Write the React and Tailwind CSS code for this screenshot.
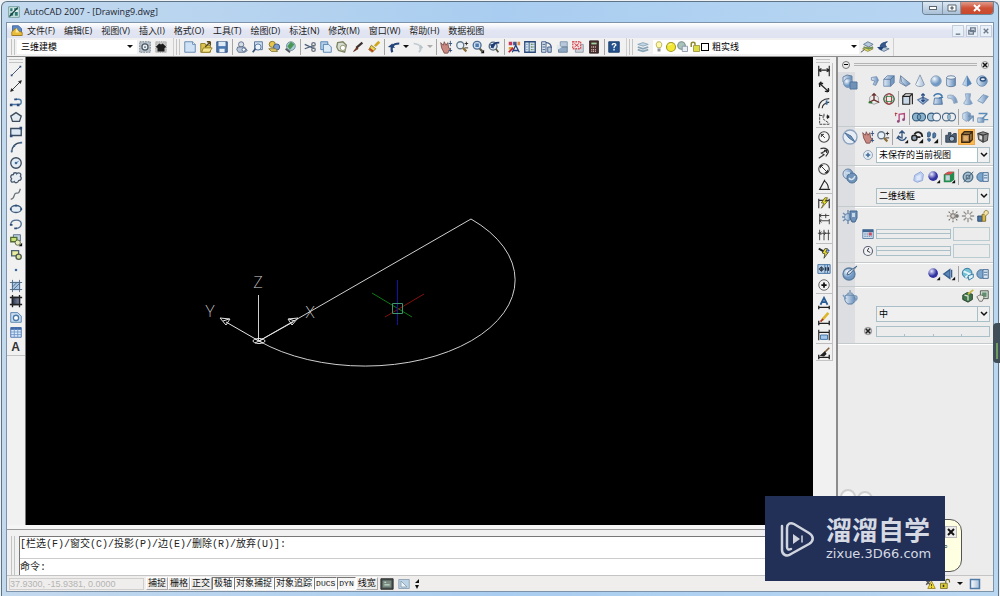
import React from 'react';

const navy = '#2c4a78';
const steel = 'url(#steel)';

const icons = {
  gear: <><path d="M2 2h12v12H2z" fill="#b9c3cc" stroke="#6d7a86" strokeDasharray="2 1" /><circle cx="8" cy="8" r="3.5" fill="#e8edf0" stroke="#4d5965" strokeWidth="1.5" /><circle cx="8" cy="8" r="1" fill="#4d5965" /></>,
  home: <><path d="M2 2h12v12H2z" fill="#c6c6c6" stroke="#8a8a8a" strokeDasharray="1 1" /><path d="M2 8l4-4 2 1 2-1 4 4-2 1v4H4V9z" fill="#1a1a1a" /></>,
  page: <><path d="M2 2h9l3 3v9H2z" fill="#cfe2f5" stroke="#5a7fa8" /><path d="M11 2v3h3" fill="#fff" stroke="#5a7fa8" /></>,
  open: <><path d="M2 4h5l1 2h5v8H2z" fill="#d9c34a" stroke="#8a7520" /><path d="M5 9h10l-3 5H3z" fill="#f5e68a" stroke="#8a7520" /><path d="M7 8l6-6m0 0H9m4 0v4" stroke="#5b4a1a" strokeWidth="1.5" fill="none" /></>,
  save: <><path d="M2 2h12v12H2z" fill="#4a78b0" stroke="#2b4a78" /><path d="M4 2h8v5H4z" fill="#dfeaf5" /><path d="M5 10h6v4H5z" fill="#e8eef5" /></>,
  print: <><circle cx="7" cy="5" r="3" fill="#d5dde8" stroke="#5c6c84" /><path d="M3 8h8l3 4-3 2H4l-2-3z" fill="#b7c6da" stroke="#5c6c84" /><circle cx="10" cy="11" r="2" fill="#fff" stroke="#46628c" /></>,
  preview: <><path d="M4 2h9v9H4z" fill="#cfe0f2" stroke="#4e6f96" /><circle cx="8" cy="8" r="3.5" fill="#eaf3fb" stroke="#4e6f96" /><path d="M5 10l-3 4" stroke="#3d5577" strokeWidth="2" /></>,
  publish: <><circle cx="6" cy="5" r="3.5" fill="#e7c64a" stroke="#80702b" /><circle cx="11" cy="8" r="3.5" fill="#7c9ccb" stroke="#36527f" /><path d="M2 10h8l2 3H5z" fill="#e3cf6c" stroke="#80702b" /></>,
  globe: <><circle cx="9" cy="7" r="5" fill="#a9cbd6" stroke="#6c8b98" /><path d="M9 2l4 3-5 6-3-4z" fill="#4c9654" /><path d="M3 10l5 4" stroke="#50575e" strokeWidth="2" /></>,
  cut: <><path d="M2 5l11 5M2 10l11-4" stroke="#4a5f78" strokeWidth="1.5" /><circle cx="12" cy="5" r="2" fill="none" stroke="#6a7480" strokeWidth="1.5" /><circle cx="12" cy="11" r="2" fill="none" stroke="#6a7480" strokeWidth="1.5" /></>,
  copy: <><path d="M2 2h8v9H2z" fill="#b5d1ec" stroke="#4f7cab" /><path d="M5 5h6l3 3v6H5z" fill="#dcebf8" stroke="#4f7cab" /></>,
  paste: <><path d="M3 3l6-1 4 4-2 8-7-2-2-4z" fill="#d5ddd0" stroke="#7d8565" strokeWidth="1.5" /><circle cx="9" cy="9" r="3" fill="#fff" stroke="#8a8f66" /></>,
  brush: <><path d="M13 3l-7 6" stroke="#3b3030" strokeWidth="2.5" /><path d="M7 8l-4 5 5-3z" fill="#7a3b22" stroke="#5d2b18" /></>,
  match: <><path d="M14 2L9 7" stroke="#d0a520" strokeWidth="3" /><path d="M5 6l5 4-4 4-4-3z" fill="#e8d54d" stroke="#8a6d1d" /><path d="M3 10l4 3" stroke="#c13b2b" strokeWidth="2" /></>,
  undo: <><path d="M6 14C4 9 6 4 14 4" stroke="#23457b" strokeWidth="2.5" fill="none" /><path d="M1 8l5-4 3 5z" fill="#23457b" /></>,
  redo: <><path d="M9 14c4-4 3-9-6-10" stroke="#c0ccd2" strokeWidth="2" fill="none" /><path d="M14 9l-5 1 2-5z" fill="#b8c4ca" /></>,
  pan: <><path d="M2 3l3 3 1-4 2 4 2-3 1 6 2 1-3 5H6L3 9z" fill="#c98880" stroke="#7d4f4c" /><path d="M13 1v6m-2-3h4M13 9v5m-2-2h4" stroke="#33507c" /></>,
  zoom: <><circle cx="6" cy="6" r="4" fill="#e8f1f8" stroke="#64788c" strokeWidth="1.5" /><path d="M9 9l4 4" stroke="#8d6f35" strokeWidth="2.5" /><path d="M11 4h4m-2-2v4m-2 3h4" stroke="#222" /></>,
  zoomWin: <><circle cx="7" cy="6" r="4.500" fill="#cfe0f0" stroke="#4d6c91" strokeWidth="1.5" /><path d="M5 4h4v4H5z" fill="#4d7bb0" /><path d="M10 10l3 3" stroke="#554" strokeWidth="2.5" /><path d="M15 11v4h-4z" fill="#111" /></>,
  zoomPrev: <><circle cx="7" cy="7" r="4.500" fill="#dfe9f2" stroke="#52687f" strokeWidth="1.5" /><path d="M10 10l3 4" stroke="#554" strokeWidth="2" /><path d="M5 9c1-4 4-6 9-6" stroke="#1d3d74" strokeWidth="2" fill="none" /><path d="M3 5l7-1-3 6z" fill="#1d3d74" /></>,
  props: <><path d="M2 2h4v4H2z" fill="#c73b58" /><path d="M7 2h4v4H7z" fill="#43548f" /><path d="M12 2h3v4h-3z" fill="#de8a43" /><path d="M2 8h5v3H2z" fill="#e0a33b" /><path d="M6 14l4-8 4 8M7 12h6" stroke="#23407a" strokeWidth="1.5" fill="none" /><path d="M2 14l5-5" stroke="#b23" strokeWidth="2" /></>,
  center: <><path d="M2 2h12v12H2z" fill="#d3e3f2" stroke="#2c4a78" strokeWidth="1.5" /><path d="M7 2v12M4 5h1m-1 3h1m-1 3h1" stroke="#2c4a78" /><path d="M9 5h4M9 8h4M9 11h4" stroke="#6a8f5a" strokeDasharray="2 1" strokeWidth="1.500" /></>,
  palette: <><path d="M3 2h5v12H3z" fill="#d9e4ef" stroke="#38547f" /><path d="M4 5h3M4 8h3m-3 3h3" stroke="#38547f" /><path d="M8 3c4 0 6 3 6 6" stroke="#38547f" strokeWidth="1.500" fill="none" /><path d="M10 8h4v6h-4z" fill="#b8cbe0" stroke="#38547f" /></>,
  sheets: <><path d="M6 2h8v6H6z" fill="#b6c8da" stroke="#7e93a8" /><path d="M4 8h10v6H4z" fill="#8fa9c4" stroke="#677b90" /><path d="M2 5l6 3-6 4" fill="#dfe6ec" /></>,
  markup: <><path d="M5 5h9v9H5z" fill="#cdd3da" stroke="#8a96a3" /><path d="M2 2h9v8H2z" fill="#f6dcdc" stroke="#d4545c" strokeDasharray="2 1" strokeWidth="1.5" /><path d="M4 4l5 4m0-4L4 8" stroke="#c9343c" /></>,
  calc: <><path d="M3 1h10v14H3z" fill="#4a3030" stroke="#2a1c1c" /><path d="M5 3h6v2H5z" fill="#9fd4a0" /><path d="M5 8h6M5 11h6M5 13h6" stroke="#e6c8c0" strokeDasharray="1 1" strokeWidth="1.500" /></>,
  help: <><path d="M2 2h12v12H2z" fill="#24528c" stroke="#183a68" /><path d="M6 6c0-3 5-2 4 0-1 1-2 1-2 3m0 1v2" stroke="#fff" strokeWidth="1.500" fill="none" /></>,
  layers: <><path d="M2 5l6-2 6 2-6 2z" fill="#c3d6e4" stroke="#86a3b8" /><path d="M2 8l6 2 6-2M2 11l6 2 6-2" stroke="#86a3b8" strokeWidth="2" fill="none" /></>,
  bulb: <><path d="M8 1c5 0 4 6 2 8H6C4 7 3 1 8 1z" fill="#fff9b0" stroke="#a69a2e" /><path d="M6 10h4v4H6z" fill="#8c9198" /></>,
  sun: <><circle cx="8" cy="8" r="6" fill="#f2e936" stroke="#a39a25" strokeWidth="1.500" /><path d="M5 6c1-2 3-2 4-2" stroke="#fff" /></>,
  freeze: <><circle cx="6" cy="6" r="5" fill="#a9c2bb" stroke="#78908b" strokeWidth="1.500" /><path d="M7 7h7v7H7z" fill="#e8eef2" stroke="#7a8a98" /></>,
  lock: <><path d="M3 8V4c0-3 5-3 5 0v2" stroke="#8f8a30" strokeWidth="2" fill="none" /><path d="M6 6h8v8H6z" fill="#dddc44" stroke="#8f8a30" /></>,
  layerPrev: <><path d="M3 10l5-2 7 2-6 3z" fill="#e7df5c" stroke="#8c8744" /><path d="M4 5l5-3 6 3-5 3z" fill="#b7c9da" stroke="#5d7690" /><path d="M4 8l6 2 5-2" stroke="#6f8f5a" strokeWidth="2" /><path d="M1 14l4-3" stroke="#444" /></>,
  layerState: <><path d="M3 10l5-2 7 2-6 3z" fill="#b7c9da" stroke="#5d7690" /><path d="M5 9c-1-5 3-6 8-7-3 2-3 3-1 6" fill="#37598c" stroke="#1d4078" /><path d="M1 8h8l-3 4z" fill="#1d4078" /></>,

  line: <><path d="M3 13L13 3" stroke="#33455e" /><path d="M2 12h2v2H2zM12 2h2v2h-2z" fill={navy} /></>,
  xline: <><path d="M2 14L14 2" stroke="#222" /><path d="M3 11l2 2-3 1zM11 3l2 2 1-3z" fill="#222" stroke="#222" /></>,
  pline: <><path d="M2 12h9c4 0 4-6 0-6H8" stroke="#4c7aa6" strokeWidth="1.500" fill="none" /><path d="M1 11h3v3H1zM9 11h3v3H9zM6 5h3v2H6z" fill={navy} /></>,
  polygon: <path d="M8 3l6 4-2 6H4L2 7z" fill="#e3eaf0" stroke="#3c4c5e" strokeWidth="1.500" />,
  rect: <><path d="M2 4h12v8H2z" fill="#dce8f4" stroke="#3c4c5e" strokeWidth="1.500" /><path d="M1 11h3v3H1zM12 2h3v3h-3z" fill={navy} /></>,
  arc: <><path d="M3 14C3 8 7 3 14 3" stroke="#33455e" strokeWidth="1.500" fill="none" /><path d="M2 12h2v2H2zM5 6h2v2H5zM13 2h2v2h-2z" fill="#3d6d9f" /></>,
  circle: <><circle cx="8" cy="8" r="6" fill="#e4edf5" stroke="#3c4c5e" strokeWidth="1.500" /><path d="M8 8l3-2" stroke="#3d6d9f" /><circle cx="8" cy="8" r="1.500" fill="#3d6d9f" /></>,
  cloud: <path d="M5 4c0-3 4-2 4-1 2-2 6 0 4 3 2 2 1 5-2 5-1 3-4 3-5 1-3 2-5-1-3-3-2-2-1-5 2-5z" fill="#e7edf2" stroke="#46566a" strokeWidth="1.500" />,
  spline: <path d="M2 14c5 0 3-7 6-7s3 1 5-5" stroke="#6a7078" strokeWidth="1.500" fill="none" />,
  ellipse: <><ellipse cx="8" cy="8" rx="6" ry="4" fill="#e4edf5" stroke="#3d5878" strokeWidth="1.500" /><path d="M1 7h2v2H1zM13 7h2v2h-2zM7 3h2v2H7z" fill={navy} /></>,
  earc: <><path d="M2 8c1-6 12-6 12 0 0 3-3 5-6 5" stroke="#4f6d91" strokeWidth="1.500" fill="none" /><path d="M1 8h3v2H1zM6 12h3v2H6z" fill={navy} /></>,
  insert: <><path d="M5 2h8v7H5z" fill="#c4d5e4" stroke="#49617c" /><path d="M2 5h7v5H2z" fill="#cddf74" stroke="#4f6d31" strokeWidth="1.500" /><circle cx="10" cy="11" r="3" fill="#e8ecb8" stroke="#4b5b40" /><path d="M15 11v4h-4z" fill="#111" /></>,
  block: <><path d="M3 3h8v6H3z" fill="#e8ec9c" stroke="#4b6171" strokeWidth="1.500" /><circle cx="11" cy="10" r="3" fill="#dadf9c" stroke="#4a5947" strokeWidth="1.500" /></>,
  point: <circle cx="8" cy="8" r="1.500" fill="#3d6d9f" />,
  hatch: <><path d="M3 3h10v10H3z" fill="#a9c6e3" /><path d="M4 1v14M12 1v14M1 4h14M1 12h14M4 9l5-5M5 12l7-7" stroke="#4c6684" /></>,
  gradient: <><path d="M3 3h10v10H3z" fill="url(#dark)" /><path d="M4 1v14M12 1v14M1 4h14M1 12h14" stroke="#222" strokeWidth="1.500" /></>,
  region: <><path d="M2 3h8l4 4v7H2z" fill="#cbdff2" stroke="#4c79a8" /><circle cx="8" cy="9" r="3" fill="#fff" stroke="#4c79a8" strokeWidth="1.500" /></>,
  table: <><path d="M2 3h12v11H2z" fill="#dcebfa" stroke="#3f68a8" /><path d="M2 4h12" stroke="#3f68a8" strokeWidth="3" /><path d="M6 4v10m4-10v10M2 8h12M2 11h12" stroke="#6f94c8" /></>,

  dimLinear: <path d="M2 2v12M14 2v12M2 7h12M5 5L2 7l3 2M11 5l3 2-3 2" stroke="#222" fill="none" strokeWidth="1.300" />,
  dimAligned: <path d="M2 5l3-3M11 14l3-3M3 4l10 9M3 8V4h4M9 13h4V9" stroke="#222" fill="none" strokeWidth="1.500" />,
  dimArc: <><path d="M2 14C2 7 7 3 14 3M6 14c0-4 3-6 8-7" stroke="#333" fill="none" strokeWidth="1.300" /><path d="M11 5v5" stroke="#3d6d9f" strokeWidth="2" /></>,
  dimOrd: <><path d="M3 2v12h11M3 4h4v4l7 5M8 2v3m4-2v5" stroke="#333" fill="none" strokeDasharray="3 1" /><path d="M11 4h3v3h-3z" fill="#222" /></>,
  dimRadius: <><circle cx="8" cy="8" r="6" fill="#f7f7f7" stroke="#444" strokeWidth="1.300" /><path d="M9 9L5 5m0 3V5h3" stroke="#222" fill="none" /></>,
  dimJog: <path d="M4 3c6-2 11 2 8 6l-2 3M2 14l6-4-3-2 6-3M8 5h3v3" stroke="#333" fill="none" strokeWidth="1.300" />,
  dimDia: <><circle cx="8" cy="8" r="6" fill="#f7f7f7" stroke="#444" strokeWidth="1.300" /><path d="M4 4l8 8M4 7V4h3m2 8h3V9" stroke="#222" fill="none" /></>,
  dimAngle: <path d="M9 2L3 13h12M8 3c3 2 5 5 5 9" stroke="#222" fill="none" strokeWidth="1.300" />,
  dimQuick: <><path d="M2 3v11M14 3v11M2 5h12" stroke="#333" strokeWidth="1.300" /><path d="M9 2l-4 6h3l-3 6 7-8H9l3-4z" fill="#eadf27" stroke="#696525" /></>,
  dimBase: <path d="M3 2v12M10 2v5M14 8v6M3 4h11M3 10h11M5 2L3 4l2 2m0 2l-2 2 2 2" stroke="#333" fill="none" />,
  dimCont: <path d="M3 2v12M8 2v12M13 2v12M1 6h14M5 4L3 6l2 2m3-4l2 2-2 2" stroke="#333" fill="none" />,
  leader: <><path d="M2 3l7 4" stroke="#222" strokeWidth="2" /><path d="M9 3L6 8l3 1-1 5 5-7h-3l2-4z" fill="#eadf27" stroke="#444" /><path d="M12 4l2 2" stroke="#3454c8" strokeWidth="2" /></>,
  tolerance: <><path d="M1 3h14v10H1z" fill="#b9d0e8" stroke="#3c6a9c" /><path d="M9 3v10M12 3v10" stroke="#3c6a9c" /><circle cx="5" cy="8" r="2" stroke="#234" /><path d="M5 5v6M2 8h6" stroke="#234" /><path d="M10 6v4M13 6v4" stroke="#223" strokeWidth="1.500" /></>,
  centerMark: <><circle cx="8" cy="8" r="6" fill="none" stroke="#555" /><path d="M8 5v6M5 8h6" stroke="#111" strokeWidth="2" /></>,
  dimEdit: <><path d="M4 10l4-8 4 8M6 7h5" stroke="#285b93" strokeWidth="2" fill="none" /><path d="M2 11v4M14 11v4M2 13h12" stroke="#222" strokeWidth="1.500" /></>,
  dimTextEdit: <><path d="M13 1L6 9" stroke="#dcb72d" strokeWidth="3" /><path d="M7 8l-3 3" stroke="#a32" strokeWidth="2" /><path d="M2 10v5M14 10v5M2 13h12" stroke="#222" strokeWidth="1.500" /></>,
  dimUpdate: <><path d="M2 2v12M14 2v12M2 5h12" stroke="#222" strokeWidth="1.300" /><path d="M4 8h8v5H4z" fill="#a6c7e7" stroke="#356aa0" /></>,
  dimStyle: <><path d="M14 2L8 8" stroke="#806440" strokeWidth="2" /><path d="M9 6L3 11l5 1 3-3z" fill="#222" /><path d="M2 10v5M14 10v5M2 13h12" stroke="#222" strokeWidth="1.500" /></>,

  polysolid: <path d="M5 4l6-1 2 4-3 6-3-1 2-4-4-1z" fill={steel} stroke="#7790b0" />,
  box: <><path d="M2 6l4-4h8v8l-4 4H2z" fill={steel} stroke="#6d8bb0" /><path d="M2 6h8l4-4M10 6v8" stroke="#536f94" fill="none" /></>,
  wedge: <><path d="M3 2l11 9-5 3-7-4z" fill={steel} stroke="#67809f" /><path d="M3 2l1 7 5 5" stroke="#67809f" fill="none" /></>,
  cone: <path d="M8 1L3 12c1 3 9 3 10 0z" fill="url(#light)" stroke="#8095ad" />,
  sphere: <circle cx="8" cy="8" r="6" fill="url(#ball)" stroke="#8aa3c0" />,
  cylinder: <><path d="M3 4v9c2 2 8 2 10 0V4z" fill={steel} stroke="#617b9c" /><ellipse cx="8" cy="4" rx="5" ry="2" fill="#eaf0f7" stroke="#617b9c" /></>,
  pyramid: <><path d="M8 2L3 12l5 2 5-3z" fill={steel} stroke="#86a3c3" /><path d="M8 2v12l5-3z" fill="#5584b6" /></>,
  torus: <><circle cx="8" cy="8" r="6" fill={steel} stroke="#6e8eb1" /><ellipse cx="9" cy="6" rx="3" ry="2" fill="#e8eef5" stroke="#2f527e" strokeWidth="1.500" /></>,
  ucs: <><path d="M8 2l5 4v6l-5 2-5-2V6z" stroke="#999" fill="none" /><path d="M8 2v7l-6 3m6-3l6 3M6 4l2-2 2 2" stroke="#6d3030" fill="none" strokeWidth="1.500" /><path d="M2 12h4" stroke="#287c32" strokeWidth="2" /></>,
  gizmo: <><circle cx="8" cy="8" r="6" fill="none" stroke="#5c4f4a" strokeWidth="1.300" /><ellipse cx="8" cy="8" rx="3" ry="6" fill="none" stroke="#b43c3c" strokeWidth="1.300" /><ellipse cx="8" cy="8" rx="6" ry="3" fill="none" stroke="#2c8a4c" /></>,
  extrude: <><path d="M2 5h8v9H2z" fill="#c8d8e8" stroke="#222" strokeWidth="1.300" /><path d="M2 5l3-3h8v12M10 5l3-3" stroke="#222" fill="none" strokeWidth="1.300" /></>,
  press: <><path d="M2 9l6-3 6 3-6 5z" fill={steel} stroke="#5f7ba3" strokeWidth="1.300" /><path d="M8 2v8M6 4l2-2 2 2M6 9l2 2 2-2" stroke="#24477d" fill="none" strokeWidth="1.300" /></>,
  sweep: <><path d="M4 7h8l1 7H3z" fill={steel} stroke="#4f759e" /><path d="M3 5c2-4 8-4 10 0M11 3l2 3-4 1" stroke="#4079ad" strokeWidth="1.500" fill="none" /></>,
  loft: <path d="M2 4c7-2 10 2 11 8l-4 1C8 8 6 7 2 7z" fill={steel} stroke="#90a5bc" />,
  revolve: <path d="M5 2h6l-1 6 3 5c-2 2-8 2-10 0l3-5z" fill={steel} stroke="#8ba5c4" />,
  plane: <path d="M2 10l6-7 6 2-6 8z" fill={steel} stroke="#7896b7" />,
  path3: <><path d="M7 13V5l6-1v7" stroke="#b7457c" strokeWidth="1.500" fill="none" /><circle cx="6" cy="13" r="1.500" fill="#8c4a7c" /><circle cx="12" cy="11" r="1.500" fill="#8c4a7c" /><path d="M2 4h3M3 3v4" stroke="#a33" /></>,
  union: <><circle cx="5" cy="8" r="4.500" fill="#8db4ca" stroke="#325a7d" strokeWidth="1.300" /><circle cx="11" cy="8" r="4.500" fill="#8db4ca" stroke="#325a7d" strokeWidth="1.300" /><ellipse cx="8" cy="8" rx="2" ry="3" fill="#75a0bd" stroke="#325a7d" /></>,
  subtract: <><circle cx="5" cy="8" r="4.500" fill="#a9c7da" stroke="#325a7d" strokeWidth="1.300" /><circle cx="11" cy="8" r="4.500" fill="#f2f4f6" stroke="#4c6b88" strokeWidth="1.300" /></>,
  intersect: <><circle cx="5" cy="8" r="4.500" fill="none" stroke="#4c6b88" strokeWidth="1.300" /><circle cx="11" cy="8" r="4.500" fill="none" stroke="#4c6b88" strokeWidth="1.300" /><ellipse cx="8" cy="8" rx="2" ry="3" fill="#8db4ca" /></>,
  move3: <><path d="M2 4l5-2 4 2v6l-5 3-4-3z" fill={steel} stroke="#8aa2be" /><path d="M8 7h6v6M8 13l6-6" stroke="#6e8eb1" fill="none" strokeWidth="1.500" /></>,
  align3: <><path d="M2 9h7v5H2z" fill={steel} stroke="#7192b6" /><path d="M3 4h10M13 4L7 10M9 11h5" stroke="#5b8bb7" strokeWidth="1.500" /></>,

  orbit: <><path d="M8 1v9M3 8c2 5 8 5 10 0M5 4l3-3 3 3M2 10l2-3 3 2" stroke="#31527d" strokeWidth="1.500" fill="none" /><path d="M15 11v4h-4z" fill="#111" /></>,
  camera: <><circle cx="5" cy="9" r="3" fill="#91a1b2" stroke="#222" strokeWidth="1.500" /><path d="M5 5c3-4 9-3 9 3M7 8h5" stroke="#222" strokeWidth="2" fill="none" /><path d="M15 10v5h-5z" fill="#111" /></>,
  walk: <><path d="M3 3c4-3 4 3 2 5H3zm0 7h3c1 4-3 4-3 0zM9 4c4-3 4 3 2 5H9z" fill="#4c7cab" stroke="#31527d" /><path d="M15 10v5h-5z" fill="#111" /></>,
  castle: <><path d="M2 6h3V3h3v4l3-3h3v10H2z" fill="#4d6077" stroke="#303d4d" /><circle cx="9" cy="10" r="3" fill="#a5bcd4" stroke="#222" /></>,
  parallel: <><path d="M2 5h9v9H2zM2 5l3-3h9v9l-3 3M11 5l3-3" fill="#b08652" stroke="#3c2a14" strokeWidth="1.500" /><path d="M4 7h5v5H4z" fill="#e2b06b" /></>,
  persp: <><path d="M2 4l6-2 6 2-1 8-5 2-5-3z" fill="#8b8b8b" stroke="#333" /><path d="M2 4l6 2v8M8 6l6-2" stroke="#333" fill="none" strokeWidth="1.500" /><path d="M4 6l3 1v4l-3-1z" fill="#ddd" /></>,
  plus: <><circle cx="8" cy="8" r="6" fill="#e5edf4" stroke="#788fa8" /><path d="M8 5v6M5 8h6" stroke="#416d9c" strokeWidth="2" /></>,
  face: <><path d="M3 6l7-4 3 3-1 7-6 2-4-2z" fill="#bdcff1" stroke="#8ca2d3" /><path d="M5 7l5-2v6l-5 1z" fill="#dce7fb" /></>,
  blueBall: <><circle cx="7" cy="7" r="5.500" fill="url(#blueball)" /><path d="M15 11v4h-4z" fill="#111" /></>,
  cube: <><path d="M2 5l5-3h7v9l-4 3H2z" fill="#238c4c" /><path d="M2 5l5-3h7l-4 3z" fill="#d94a50" /><path d="M4 6h5v6H4z" fill="#c3d3d9" /><path d="M15 11v4h-4z" fill="#111" /></>,
  xray: <><circle cx="8" cy="8" r="5.500" fill="#a9bfce" stroke="#4e7088" strokeWidth="1.500" /><path d="M3 14L14 2M6 6h4v4H6z" stroke="#3d5d76" fill="none" /></>,
  styles: <><circle cx="6" cy="8" r="5" fill="#7ba5cc" stroke="#3c658f" /><path d="M8 3h6v10H8z" fill="#d9e8f4" stroke="#3b638e" /><path d="M9 6h4M9 9h4" stroke="#3b638e" /></>,
  lightA: <><path d="M8 1v14M1 8h14M3 3l10 10M13 3L3 13" stroke="#77716c" strokeWidth="1.300" strokeDasharray="2 1" /><circle cx="8" cy="8" r="2.500" fill="#d8d2ca" stroke="#77716c" /><path d="M11 6h3v4h-3z" fill="#777" /></>,
  lightB: <><path d="M8 1v14M1 8h14M3 3l10 10M13 3L3 13" stroke="#96928c" strokeDasharray="4 6" strokeWidth="1.500" /><circle cx="8" cy="8" r="3" fill="#eee" stroke="#aaa" /></>,
  lightC: <><path d="M2 8h5v6H2z" fill="#4d77a5" stroke="#24446c" /><path d="M7 6h4v8H7z" fill="#d5b954" stroke="#7c641f" /><path d="M9 5c0-5 6-4 5 0l-3 3" fill="#f3e6a5" stroke="#8a7840" /></>,
  date: <><path d="M1 2h14v12H1z" fill="#cfdfee" stroke="#3f6690" /><path d="M1 4h14" stroke="#3f6690" strokeWidth="3" /><path d="M3 8h10M3 11h10" stroke="#6685a8" strokeDasharray="2 1" strokeWidth="1.500" /><path d="M9 6h4v4H9z" fill="#cf4c62" /></>,
  clock: <><circle cx="8" cy="8" r="6" fill="#f2f3f6" stroke="#5c6172" strokeWidth="1.500" /><path d="M9 4L7 8l4 2" stroke="#333" fill="none" strokeWidth="1.300" /></>,
  mapping: <><path d="M2 8l7-5v10zM11 3v9" fill="#5b87b8" stroke="#375f8e" strokeWidth="1.500" /><path d="M15 11v4h-4z" fill="#111" /></>,
  matGlobe: <><circle cx="7" cy="7" r="5.500" fill="#73bfd3" stroke="#2c6f9b" /><path d="M3 5l7 3-5 4" stroke="#e5f6f9" strokeWidth="2" fill="none" /><path d="M8 10l6-2v4l-5 3z" fill="#dff1f6" stroke="#2c6f9b" /></>,
  render: <><path d="M2 7l5-3 6 2v6l-5 3-6-3z" fill="#3d7548" stroke="#243c2a" /><path d="M4 7l4 1v5" stroke="#d9ddd2" strokeWidth="1.500" fill="none" /><path d="M8 6l6-5" stroke="#c6bc43" strokeWidth="2" /></>,
  renderWin: <><path d="M5 2h9v9H5z" fill="#cfd8ce" stroke="#49564a" /><path d="M7 4h5v5H7z" fill="#5f8e6b" /><path d="M1 9c2-3 8-3 8 1l-2 4H4z" fill="#e6e6df" stroke="#666" /></>,
  cancel: <><circle cx="8" cy="8" r="5" fill="#c7c7c7" stroke="#888" /><path d="M5 5l6 6M11 5l-6 6" stroke="#222" strokeWidth="2" /></>,

  makeGroup: <><path d="M1 3l4-2 5 1v6l-4 2-5-2z" fill={steel} stroke="#6884a5" /><circle cx="6" cy="9" r="4.500" fill="url(#ball)" stroke="#7f99b8" /><path d="M8 8h7v7H8z" fill="#6f91b8" stroke="#52749d" /></>,
  navGroup: <><circle cx="8" cy="8" r="7" fill="#e6edf5" stroke="#8da4bf" strokeWidth="1.300" /><path d="M3 4l6 3 4 6-6-4z" fill="#6f92bb" stroke="#4b6f9a" /></>,
  styleGroup: <><circle cx="6" cy="6" r="5" fill={steel} stroke="#6884a5" /><circle cx="10" cy="10" r="5" fill="#6f93b9" stroke="#4e7198" /><path d="M7 10c2 3 5 1 6-2M4 5h4" stroke="#d5e2ef" strokeWidth="1.500" fill="none" /></>,
  lightGroup: <><path d="M6 1v14M1 4l10 8M11 4L1 12M0 8h12" stroke="#7090b4" strokeWidth="1.500" /><circle cx="6" cy="8" r="3.500" fill={steel} stroke="#6884a5" /><path d="M8 2h7v7l-2 4h-3L8 9z" fill="#6f91b8" stroke="#41658e" /><path d="M10 4h3v4h-3z" fill="#c7d8e9" /></>,
  matGroup: <><circle cx="7" cy="9" r="6" fill="url(#ball)" stroke="#5d7e9f" strokeWidth="1.300" /><path d="M15 1L8 9l-3 1 1-3z" fill="#e3eaf1" stroke="#49698a" /></>,
  teapot: <><path d="M4 6h8c3 5 0 8-2 9H6C4 14 1 10 4 6z" fill={steel} stroke="#55799e" /><path d="M4 10L1 6M12 7c4-1 4 4 0 5M5 6c1-3 5-3 6 0M8 1v2" stroke="#7f9dbd" strokeWidth="1.500" fill="none" /></>,
  cad: <><path d="M1 1h14v14H1z" fill="#dcecea" stroke="#4c8480" /><path d="M3 3h3v4H3zM8 3h5v2H8zM3 9h4v4H3zM9 8h4v5H9z" fill="#2e7772" /><path d="M2 14L13 2" stroke="#16413e" strokeWidth="1.500" /></>,
  dwg: <><path d="M2 1h8l4 4v9H2z" fill="#5a88c9" stroke="#31558c" /><path d="M1 9l6-5 3 4 5 2v4H1z" fill="#e8bb3a" stroke="#9b7314" /><path d="M7 4l4 6H6z" fill="#fbe9a0" /></>,
  model: <><path d="M1 2h14v12H1z" fill="#46504f" stroke="#222" /><path d="M3 4h10v8H3z" fill="#7a8a80" /><path d="M5 6h2m-2 3h6" stroke="#dfe" /></>,
  layout: <><path d="M1 2h14v12H1z" fill="#bcd3e6" stroke="#7e95aa" /><path d="M4 4v8h8z" fill="#eef5fa" stroke="#7e95aa" /></>,
  warn: <><path d="M2 2l7 8M9 2L3 9" stroke="#555" strokeWidth="2" /><path d="M10 4l5 10H5z" fill="#f4dc2c" stroke="#8a7514" /><path d="M10 8v3m0 1v1" stroke="#222" /></>,
  unlock: <><path d="M9 8V4c0-3 5-3 5 0v2" stroke="#6e671e" strokeWidth="1.500" fill="none" /><path d="M2 7h9v7H2z" fill="#dccb33" stroke="#6e671e" /><path d="M6 9v3" stroke="#333" strokeWidth="2" /></>,
  clean: <path d="M2 2h12v12H2z" fill="url(#light)" stroke="#4f7ba8" strokeWidth="2" />,
};

function Icon({ name, className = 'size-3.5' }) {
  return <svg viewBox="0 0 16 16" fill="none" className={`shrink-0 ${className}`} aria-hidden="true">{icons[name]}</svg>;
}

function Tool({ name, className = 'w-4 h-4' }) {
  return (
    <button aria-label={name} className={`flex items-center justify-center shrink-0 ${className}`}>
      <Icon name={name} />
    </button>
  );
}

function Tools({ list, className }) {
  return list.map((name, i) => name === '|'
    ? <span key={i} className="w-1 shrink-0 flex justify-center"><span className="w-px h-4 bg-[#a5a5a5]" /></span>
    : <Tool key={i} name={name} className={className} />);
}

function Caret() {
  return <svg viewBox="0 0 6 4" className="w-1.5 h-1 shrink-0" aria-hidden="true"><path d="M0 0h6L3 3z" fill="#111" /></svg>;
}

function Grip() {
  return <span className="w-1 h-4 mx-0.5 shrink-0 border-x border-[#c4c4c4]" />;
}

const menus = ['文件(F)', '编辑(E)', '视图(V)', '插入(I)', '格式(O)', '工具(T)', '绘图(D)', '标注(N)', '修改(M)', '窗口(W)', '帮助(H)', '数据视图'];
const drawTools = ['line', 'xline', 'pline', 'polygon', 'rect', 'arc', 'circle', 'cloud', 'spline', 'ellipse', 'earc', 'insert', 'block', 'point', 'hatch', 'gradient', 'region', 'table'];
const dimTools = ['dimLinear', 'dimAligned', 'dimArc', 'dimOrd', '|', 'dimRadius', 'dimJog', 'dimDia', 'dimAngle', '|', 'dimQuick', 'dimBase', 'dimCont', '|', 'leader', 'tolerance', 'centerMark', '|', 'dimEdit', 'dimTextEdit', 'dimUpdate', '|', 'dimStyle'];
const modes = [['捕捉', false], ['栅格', false], ['正交', false], ['极轴', true], ['对象捕捉', true], ['对象追踪', true], ['DUCS', true], ['DYN', true], ['线宽', false]];

function TitleBar() {
  return (
    <header className="h-5 shrink-0 flex items-start pl-0.5">
      <div className="flex items-center gap-1 h-[19px]">
        <Icon name="cad" className="size-3" />
        <h1 className="text-[9px] leading-3 text-[#1c2530]">AutoCAD 2007 - [Drawing9.dwg]</h1>
      </div>
      <div className="ml-auto flex h-[13px] rounded-b border border-t-0 border-[#6f8396] overflow-hidden">
        <button aria-label="Minimize" className="w-5 flex items-center justify-center border-r border-[#8397aa] bg-linear-to-b from-[#dce8f3] to-[#a9c0d7]">
          <span className="w-2 h-1 border border-[#5b6670] bg-white" />
        </button>
        <button aria-label="Restore" className="w-[18px] flex items-center justify-center border-r border-[#8397aa] bg-linear-to-b from-[#dce8f3] to-[#a9c0d7]">
          <svg viewBox="0 0 10 8" className="w-2.5 h-2"><path d="M1 1h8v6H1z" fill="#fff" stroke="#5b6670" /><path d="M4 3h2v2H4z" fill="#8b9dae" stroke="#5b6670" /></svg>
        </button>
        <button aria-label="Close" className="w-8 flex items-center justify-center bg-linear-to-b from-[#e09a8a] via-[#cf5136] to-[#c8492c]">
          <svg viewBox="0 0 8 8" className="size-2"><path d="M1 1l6 6M7 1L1 7" stroke="#fff" strokeWidth="2" /></svg>
        </button>
      </div>
    </header>
  );
}

function MenuBar() {
  return (
    <nav className="h-[15px] shrink-0 flex items-center pl-1 bg-linear-to-b from-white via-[#e2e6f3] to-[#dfe3f1]">
      <Icon name="dwg" className="size-3 mr-1" />
      <div className="flex gap-[9px] text-[9px] leading-[14px] text-[#1b1b1b]">
        {menus.map((m) => <button key={m} className="whitespace-nowrap">{m}</button>)}
      </div>
      <div className="ml-auto flex gap-0.5 pr-px">
        {['M3 9h5', 'M4 2h5v4H4zM2 5h5v4H2z', 'M3 3l5 5M8 3L3 8'].map((d) => (
          <button key={d} aria-label="Document window" className="size-3 border border-[#c3cedd] bg-[#eaf0f8] flex items-center justify-center">
            <svg viewBox="0 0 11 11" className="size-2.5"><path d={d} stroke="#6b7a8c" strokeWidth="1.500" fill="none" /></svg>
          </button>
        ))}
      </div>
    </nav>
  );
}

function Toolbars() {
  return (
    <div className="h-[19px] shrink-0 flex items-center bg-[#f1f1f1] border-b border-[#8f8f8f]">
      <div className="flex items-center h-full pl-0.5 pr-1 border-r border-[#cfcfcf]">
        <Grip />
        <div className="w-[120px] h-3.5 flex items-center bg-white pr-1 pl-0.5">
          <select aria-label="Workspace" className="flex-1 min-w-0 appearance-none text-[9px] leading-3 pl-0.5 outline-none">
            <option>三维建模</option>
          </select>
          <Caret />
        </div>
        <Tools list={['gear', 'home']} />
      </div>
      <div className="flex items-center h-full pr-1 border-r border-[#cfcfcf]">
        <Grip />
        <Tools list={['page', 'open', 'save', '|', 'print', 'preview', 'publish', 'globe', '|', 'cut', 'copy', 'paste', 'brush', 'match', '|', 'undo']} />
        <span className="w-2 flex justify-center"><Caret /></span>
        <Tool name="redo" />
        <span className="w-2 flex justify-center opacity-30"><Caret /></span>
        <Tools list={['|', 'pan', 'zoom', 'zoomWin', 'zoomPrev', '|', 'props', 'center', 'palette', 'sheets', 'markup', 'calc', '|', 'help']} />
      </div>
      <div className="flex items-center h-full pr-0.5 border-r border-[#cfcfcf]">
        <Grip />
        <Tool name="layers" />
        <div className="w-[206px] h-3.5 ml-0.5 flex items-center bg-white pr-0.5">
          <Icon name="bulb" className="size-3" />
          <Icon name="sun" className="size-3" />
          <Icon name="freeze" className="size-3" />
          <Icon name="lock" className="size-3" />
          <span className="size-2 border border-black shrink-0" />
          <select aria-label="Layer" className="flex-1 min-w-0 appearance-none text-[9px] leading-3 pl-[3px] outline-none">
            <option>粗实线</option>
          </select>
          <Caret />
        </div>
        <Tools list={['layerPrev', 'layerState']} />
      </div>
    </div>
  );
}

function Drawing() {
  return (
    <svg className="flex-1 min-w-0 h-full bg-black border-l border-[#777]" fill="none" stroke="#e4e4e4">
      <path d="M233 284L445 162A150 86 0 0 1 233 284" stroke="#cfcfcf" />
      <path d="M232.500 238v46" stroke="#cfcfcf" />
      <path d="M233 284l34-19M233 284l-33-19" />
      <path d="M272 261l-10 1 4 6zM194 261l10 1-4 6z" />
      <path d="M263 262l6 2M203 262l-6 2" />
      <ellipse cx="233" cy="284" rx="6" ry="2.500" />
      <path d="M229 282l8 4M237 282l-8 4" />
      <path d="M346 236l40 24" stroke="#0a7a12" />
      <path d="M398 237l-39 23" stroke="#86100d" />
      <path d="M371.500 223v45" stroke="#1212a0" />
      <path d="M366.500 246.500h10v10h-10z" stroke="#3f9470" />
      <g stroke="none" fill="#d0d0d0" fontFamily="Roboto, sans-serif" fontWeight="200" fontSize="16" textAnchor="middle">
        <text x="232" y="231">Z</text>
        <text x="284" y="261">X</text>
        <text x="184" y="260">Y</text>
      </g>
    </svg>
  );
}

function Combo({ label, value, className = 'bg-[#f0f0f0]' }) {
  return (
    <div className={`w-[114px] h-4 flex items-center border border-[#a9bfc8] ${className}`}>
      <select aria-label={label} className="flex-1 min-w-0 h-full appearance-none text-[9px] leading-3 pl-0.5 outline-none">
        <option>{value}</option>
      </select>
      <span className="w-3 h-full border-l border-[#a9bfc8] bg-[#f0f0f0] flex items-center justify-center">
        <svg viewBox="0 0 8 6" className="w-2 h-1.5"><path d="M1 1l3 3 3-3" stroke="#111" strokeWidth="1.500" fill="none" /></svg>
      </span>
    </div>
  );
}

function Group({ icon, className = '', children }) {
  return (
    <section className={`flex border-b border-[#c5cbcd] shadow-[0_1px_0_#fff] ${className}`}>
      <div className="w-[17px] shrink-0 bg-[#dcdee2] pt-0.5"><Icon name={icon} className="size-4 ml-1" /></div>
      <div className="flex-1 min-w-0 flex flex-col items-end pr-[3px]">{children}</div>
    </section>
  );
}

function PanelRow({ list, className = '' }) {
  return <div className={`h-[18px] flex items-center ${className}`}><Tools list={list} className="w-[15px] h-4" /></div>;
}

function SliderRow({ icon, label }) {
  return (
    <div className="h-[17px] flex items-center">
      <Icon name={icon} className="size-3 mr-0.5" />
      <label className="w-[75px] h-2.5 mr-0.5 border border-[#a9c0c8] flex items-center">
        <input type="range" aria-label={label} className="w-full h-px appearance-none bg-[#a9c0c8] [&::-webkit-slider-thumb]:appearance-none" />
      </label>
      <input aria-label={`${label} value`} className="w-[37px] h-3.5 border border-[#b8ccd2]" />
    </div>
  );
}

function Dashboard() {
  return (
    <aside className="w-[157px] shrink-0 bg-[#ececec] border-l-2 border-[#8c8c8c] flex flex-col relative">
      <div className="h-[15px] flex items-center gap-1 px-1">
        <button aria-label="Minimize panel" className="size-2 border border-[#777] rounded-sm flex items-center justify-center"><span className="w-1 h-px bg-black" /></button>
        <span className="flex-1 h-[3px] border-y border-[#b4b4b4]" />
        <button aria-label="Close panel" className="size-2 border border-[#999] rounded-sm"><svg viewBox="0 0 6 6" className="size-1.5"><path d="M1 1l4 4M5 1L1 5" stroke="#111" strokeWidth="1.500" /></svg></button>
      </div>
      <Group icon="makeGroup" className="h-[55px]">
        <PanelRow list={['polysolid', 'box', 'wedge', 'cone', 'sphere', 'cylinder', 'pyramid', 'torus']} className="w-[124px] justify-between" />
        <PanelRow list={['ucs', 'gizmo', '|', 'extrude', 'press', 'sweep', 'loft', 'revolve', 'plane']} />
        <PanelRow list={['path3', '|', 'union', 'subtract', 'intersect', '|', 'move3', 'align3']} />
      </Group>
      <Group icon="navGroup" className="h-[39px]">
        <div className="h-5 flex items-center">
          <Tools list={['pan', 'zoom', '|', 'orbit', 'camera', 'walk', '|', 'castle']} className="w-[15px] h-4" />
          <Tool name="parallel" className="w-[17px] h-4 bg-[#ffb84d] border border-[#e6a84a]" />
          <Tool name="persp" className="w-[15px] h-4" />
        </div>
        <div className="flex items-center gap-0.5">
          <Icon name="plus" className="size-3" />
          <Combo label="View" value="未保存的当前视图" className="bg-white" />
        </div>
      </Group>
      <Group icon="styleGroup" className="h-[41px]">
        <PanelRow list={['face', 'blueBall', 'cube', '|', 'xray', 'styles']} className="my-0.5" />
        <Combo label="Visual style" value="二维线框" />
      </Group>
      <Group icon="lightGroup" className="h-14">
        <PanelRow list={['lightA', 'lightB', 'lightC']} />
        <SliderRow icon="date" label="Date" />
        <SliderRow icon="clock" label="Time" />
      </Group>
      <Group icon="matGroup" className="h-6">
        <PanelRow list={['blueBall', 'mapping', '|', 'matGlobe', 'styles']} className="mt-0.5" />
      </Group>
      <Group icon="teapot" className="h-[57px]">
        <PanelRow list={['render', 'renderWin']} className="mb-px" />
        <Combo label="Render preset" value="中" />
        <div className="flex items-center gap-0.5 h-[18px]">
          <Icon name="cancel" className="size-3" />
          <span className="w-[114px] h-[11px] border border-[#a9c0c8] flex items-end justify-evenly">
            <span className="w-px h-0.5 bg-[#a9c0c8]" /><span className="w-px h-0.5 bg-[#a9c0c8]" /><span className="w-px h-0.5 bg-[#a9c0c8]" />
          </span>
        </div>
      </Group>
      <svg viewBox="0 0 36 20" className="absolute left-0 bottom-[68px] w-9 h-5" fill="#f7f7f7" stroke="#cfcfcf" strokeWidth="2"><circle cx="10" cy="10" r="7" /><circle cx="27" cy="12" r="7" /></svg>
    </aside>
  );
}

function CommandLine() {
  return (
    <div className="h-[46px] shrink-0 flex bg-[#f1f1f1] border-t border-[#9a9a9a] pt-1.5">
      <span className="w-1 mx-1 border-x border-[#c4c4c4]" />
      <div className="flex-1 min-w-0 bg-white border-l border-t border-[#777] font-['Liberation_Mono','Noto_Sans_CJK_SC',monospace] text-[10px] text-[#222]">
        <p className="h-[22px] pt-px leading-[14px] border-b border-[#ccc] whitespace-nowrap">[栏选(F)/窗交(C)/投影(P)/边(E)/删除(R)/放弃(U)]:</p>
        <div className="flex h-4 items-center">
          <label htmlFor="command">命令:</label>
          <input id="command" className="flex-1 min-w-0 outline-none" />
        </div>
      </div>
    </div>
  );
}

function StatusBar() {
  return (
    <footer className="h-4 shrink-0 flex items-center bg-[#f0eeec] border-t border-[#c4c4c4] pl-0.5 text-[9px] leading-3 text-[#111]">
      <span className="w-[135px] h-3 leading-[11px] mr-0.5 border border-[#cfcfcf] text-[#b3b3b3] font-['Liberation_Sans',sans-serif]">37.9300, -15.9381, 0.0000</span>
      <div className="flex">
        {modes.map(([label, on]) => (
          <button key={label} aria-pressed={on} className={`h-[13px] px-px border whitespace-nowrap font-['Liberation_Mono','Noto_Sans_CJK_SC',monospace] ${label.startsWith('D') ? 'text-[8px]' : ''} ${on ? 'border-[#777] border-r-white border-b-white bg-[#f7f7f7]' : 'border-white border-r-[#aaa] border-b-[#aaa]'}`}>{label}</button>
        ))}
      </div>
      <button aria-label="Model" className="ml-0.5"><Icon name="model" /></button>
      <button aria-label="Layout" className="ml-1"><Icon name="layout" className="size-3" /></button>
      <svg viewBox="0 0 6 10" className="w-1.5 h-2.5 ml-1"><path d="M5 0v4H1zM1 6h4L3 10z" fill="#111" /></svg>
      <div className="ml-auto flex items-center gap-[3px] pr-3">
        <Icon name="warn" className="size-3" />
        <Icon name="unlock" className="size-3" />
        <span className="w-3 flex justify-center"><Caret /></span>
        <Icon name="clean" className="size-3" />
      </div>
    </footer>
  );
}

function Watermark() {
  return (
    <div className="absolute right-[55px] bottom-[15px] w-[180px] h-[85px] bg-[#222f56] flex items-center gap-3 pl-[15px] text-[#d5d9e3]">
      <svg viewBox="0 0 34 36" className="w-[34px] h-9 shrink-0" fill="none" stroke="#cfd4df" strokeWidth="2.500" strokeLinecap="round">
        <path d="M2 5v24c0 5 5 7 9 4l18-10c5-3 5-8 0-11L14 3C10 1 7 3 7 7v19c0 3 2 3 4 2" />
        <path d="M13 13l7 5-7 5z" fill="#cfd4df" stroke="none" />
        <path d="M22 15v6" strokeWidth="1.500" />
      </svg>
      <div className="whitespace-nowrap">
        <p className="text-[26px] leading-[30px] font-bold font-['Liberation_Sans','Noto_Sans_CJK_SC',sans-serif]">溜溜自学</p>
        <p className="text-[13px] leading-[15px] font-['DejaVu_Sans',sans-serif]">zixue.3D66.com</p>
      </div>
    </div>
  );
}

export default function App() {
  return (
    <div className="min-h-screen bg-[#eef1f4] pt-px px-px flex relative overflow-hidden font-['Open_Sans','Noto_Sans_CJK_SC',sans-serif]">
      <svg className="absolute size-0" aria-hidden="true">
        <defs>
          <linearGradient id="steel"><stop offset="0" stopColor="#e1ecf8" /><stop offset="1" stopColor="#6189b7" /></linearGradient>
          <linearGradient id="light"><stop offset="0" stopColor="#ffffff" /><stop offset="1" stopColor="#a3bbd5" /></linearGradient>
          <linearGradient id="dark"><stop offset="0" stopColor="#25304c" /><stop offset="1" stopColor="#8a93ad" /></linearGradient>
          <radialGradient id="ball" cx="0.35" cy="0.3"><stop offset="0" stopColor="#f5f9fd" /><stop offset="1" stopColor="#6f98c4" /></radialGradient>
          <radialGradient id="blueball" cx="0.35" cy="0.3"><stop offset="0" stopColor="#e6e9ff" /><stop offset="1" stopColor="#3334a0" /></radialGradient>
        </defs>
      </svg>
      <div className="flex-1 min-w-0 flex flex-col rounded-t-md border border-b-0 border-[#5f7386] bg-linear-to-r from-[#c3d9ee] via-[#a9cdf0] to-[#bad7f2] px-1 pb-1">
        <TitleBar />
        <div className="flex-1 flex flex-col border border-[#7c93a9] bg-[#f1f1f1]">
          <MenuBar />
          <Toolbars />
          <div className="flex-1 flex">
            <div className="flex-1 min-w-0 flex flex-col">
              <main className="flex-1 flex border-b-4 border-[#f5f5f5]">
                <div className="w-[18px] shrink-0 pt-0.5">
                  <div className="h-1 mx-0.5 border-y border-[#c4c4c4]" />
                  <div className="h-[292px] flex flex-col justify-between">
                    {drawTools.map((t) => <Tool key={t} name={t} className="w-[17px] h-[15px]" />)}
                    <button className="w-[17px] h-[15px] leading-[15px] text-[12px] font-bold text-[#333] font-['Liberation_Sans',sans-serif]">A</button>
                  </div>
                  <div className="border-b border-[#c4c4c4]" />
                </div>
                <Drawing />
                <div className="w-[23px] shrink-0 pt-0.5 pl-[3px]">
                  <div className="h-1 w-3.5 border-y border-[#c4c4c4]" />
                  <div className="w-[17px] h-[298px] flex flex-col justify-between border-b border-r border-[#c4c4c4]">
                    {dimTools.map((t, i) => t === '|'
                      ? <span key={i} className="h-px bg-[#bdbdbd]" />
                      : <Tool key={i} name={t} className="w-4 h-[15px]" />)}
                  </div>
                </div>
              </main>
              <CommandLine />
            </div>
            <Dashboard />
          </div>
          <StatusBar />
        </div>
      </div>
      <div className="absolute right-[38px] bottom-6 w-20 h-[53px] rounded-xl border border-[#555] bg-[#ffffe1] flex flex-col items-end pt-1.5 pr-1">
        <button aria-label="Close message" className="size-3 bg-[#ececec] border border-[#bbb] flex items-center justify-center"><svg viewBox="0 0 8 8" className="size-2"><path d="M1 1l6 6M7 1L1 7" stroke="#111" strokeWidth="2" /></svg></button>
        <span className="text-[9px] leading-3 mr-1">。</span>
      </div>
      <Watermark />
      <div className="absolute right-0 top-[323px] w-[7px] h-10 rounded-l-sm bg-[#3f4e59] flex items-end justify-center pb-1"><span className="w-0.5 h-4 bg-[#6f9a62]" /></div>
    </div>
  );
}
